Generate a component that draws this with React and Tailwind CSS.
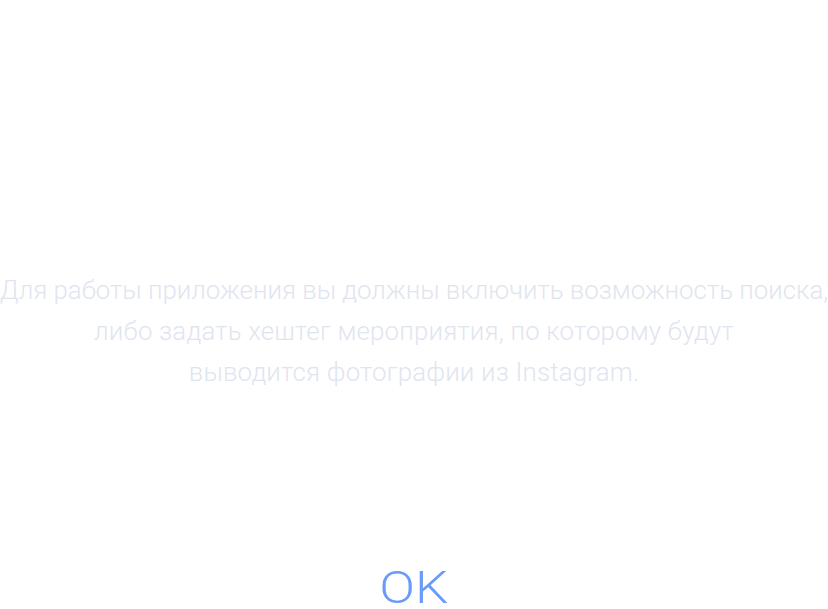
export default function App() {
  return (
    <div className="w-[828px] h-[609px] bg-white flex flex-col items-center overflow-hidden font-['Roboto',sans-serif]">
      <div className="pt-[270px] text-center text-[25.8px] leading-[41px] font-light text-[#dfe5f0] whitespace-nowrap">
        <p>Для работы приложения вы должны включить возможность поиска,</p>
        <p className="tracking-[0.2px]">либо задать хештег мероприятия, по которому будут</p>
        <p className="tracking-[0.2px]">выводится фотографии из Instagram.</p>
      </div>
      <div className="mt-[176px] text-[44px] leading-[38px] font-light scale-x-[1.2] text-[#6a9bfb]">OK</div>
    </div>
  );
}
